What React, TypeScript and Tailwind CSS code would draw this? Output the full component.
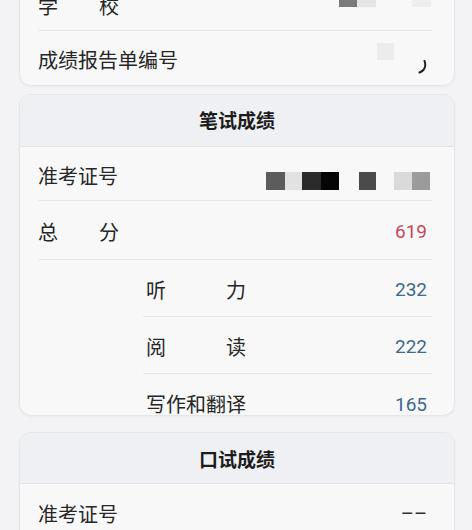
import type { ReactNode } from "react";

const cjk = "font-['Noto_Sans_CJK_SC',sans-serif]";

function Spaced({ chars, width }: { chars: string[]; width: string }) {
  return (
    <span className={`flex justify-between ${width}`}>
      {chars.map((c) => (
        <span key={c}>{c}</span>
      ))}
    </span>
  );
}

function Row({
  label,
  children,
  className,
  divider = true,
}: {
  label: ReactNode;
  children?: ReactNode;
  className: string;
  divider?: boolean;
}) {
  return (
    <div
      className={`flex items-center justify-between pt-[4px] ${divider ? "border-b border-[#e8e8ea]" : ""} ${className}`}
    >
      <div className="text-[20px] leading-[20px] text-[#262626]">{label}</div>
      <div className="flex items-center">{children}</div>
    </div>
  );
}

function Score({ value, color }: { value: string; color: string }) {
  return (
    <span className={`pr-[5px] font-['Roboto',sans-serif] text-[19px] leading-[20px] ${color}`}>
      {value}
    </span>
  );
}

export default function App() {
  return (
    <div className={`h-[530px] w-[472px] overflow-hidden bg-[#f3f3f5] pl-[19px] pr-[17px] ${cjk}`}>
      {/* school info card, scrolled partly out of view */}
      <div className="-mt-[23px] rounded-xl border border-[#e6e6e9] bg-[#f8f8f9] shadow-[0_1px_3px_rgba(0,0,0,0.04)]">
        <Row label={<Spaced chars={["学", "校"]} width="w-[81px]" />} className="ml-[18px] mr-[22px] h-[53px]">
          <div className="mb-[16px] flex items-center pr-[1px]">
            <div className="h-[18px] w-[18px] bg-[#7a7a7a]" />
            <div className="h-[18px] w-[19px] bg-[#e6e6e6]" />
            <div className="ml-[36px] h-[18px] w-[19px] bg-[#eeeeee]" />
          </div>
        </Row>
        <Row label="成绩报告单编号" className="ml-[18px] mr-[22px] h-[54px]" divider={false}>
          <div className="mb-[17px] h-[17px] w-[17px] bg-[#ececec]" />
          <svg className="ml-[24px] mr-[5px] mt-[14px]" width="9" height="14" viewBox="0 0 9 14">
            <path d="M6.5 1 C8 5 7.5 10 1.5 12.5" fill="none" stroke="#1f1f1f" strokeWidth="2" strokeLinecap="round" />
          </svg>
        </Row>
      </div>

      {/* written exam */}
      <div className="mt-[8px] rounded-xl border border-[#e6e6e9] bg-[#f8f8f9] shadow-[0_1px_3px_rgba(0,0,0,0.04)]">
        <div className="flex h-[52px] items-center justify-center rounded-t-xl border-b border-[#e3e4e8] bg-[#eff0f4] text-[19px] font-bold text-[#1c1c1c]">
          笔试成绩
        </div>
        <Row label="准考证号" className="ml-[18px] mr-[22px] h-[54px]">
          <div className="mt-[10px] flex items-center pr-[2px]">
            <div className="h-[18px] w-[19px] bg-[#5c5c5c]" />
            <div className="h-[18px] w-[17px] bg-[#e2e2e2]" />
            <div className="h-[18px] w-[19px] bg-[#2b2b2b]" />
            <div className="h-[18px] w-[18px] bg-[#050505]" />
            <div className="ml-[20px] h-[18px] w-[17px] bg-[#4b4b4b]" />
            <div className="ml-[18px] h-[18px] w-[18px] bg-[#dadada]" />
            <div className="h-[18px] w-[18px] bg-[#9b9b9b]" />
          </div>
        </Row>
        <Row label={<Spaced chars={["总", "分"]} width="w-[81px]" />} className="ml-[18px] mr-[22px] h-[59px]">
          <Score value="619" color="text-[#c5485a]" />
        </Row>
        <Row label={<Spaced chars={["听", "力"]} width="w-[103px] pl-[3px]" />} className="ml-[123px] mr-[22px] h-[57px]">
          <Score value="232" color="text-[#3d6891]" />
        </Row>
        <Row label={<Spaced chars={["阅", "读"]} width="w-[103px] pl-[3px]" />} className="ml-[123px] mr-[22px] h-[57px]">
          <Score value="222" color="text-[#3d6891]" />
        </Row>
        <div className="ml-[123px] mr-[22px] flex h-[41px] items-end justify-between">
          <span className="pl-[3px] text-[20px] leading-[22px] text-[#262626]">写作和翻译</span>
          <Score value="165" color="text-[#3d6891]" />
        </div>
      </div>

      {/* oral exam */}
      <div className="mt-[16px] rounded-xl border border-[#e6e6e9] bg-[#f8f8f9] shadow-[0_1px_3px_rgba(0,0,0,0.04)]">
        <div className="flex h-[51px] items-center justify-center rounded-t-xl border-b border-[#e3e4e8] bg-[#eff0f4] pt-[2px] text-[19px] font-bold text-[#1c1c1c]">
          口试成绩
        </div>
        <Row label="准考证号" className="ml-[18px] mr-[22px] h-[57px]">
          <span className="pr-[5px] font-['Roboto',sans-serif] text-[20px] leading-[20px] text-[#333]">––</span>
        </Row>
      </div>
    </div>
  );
}
